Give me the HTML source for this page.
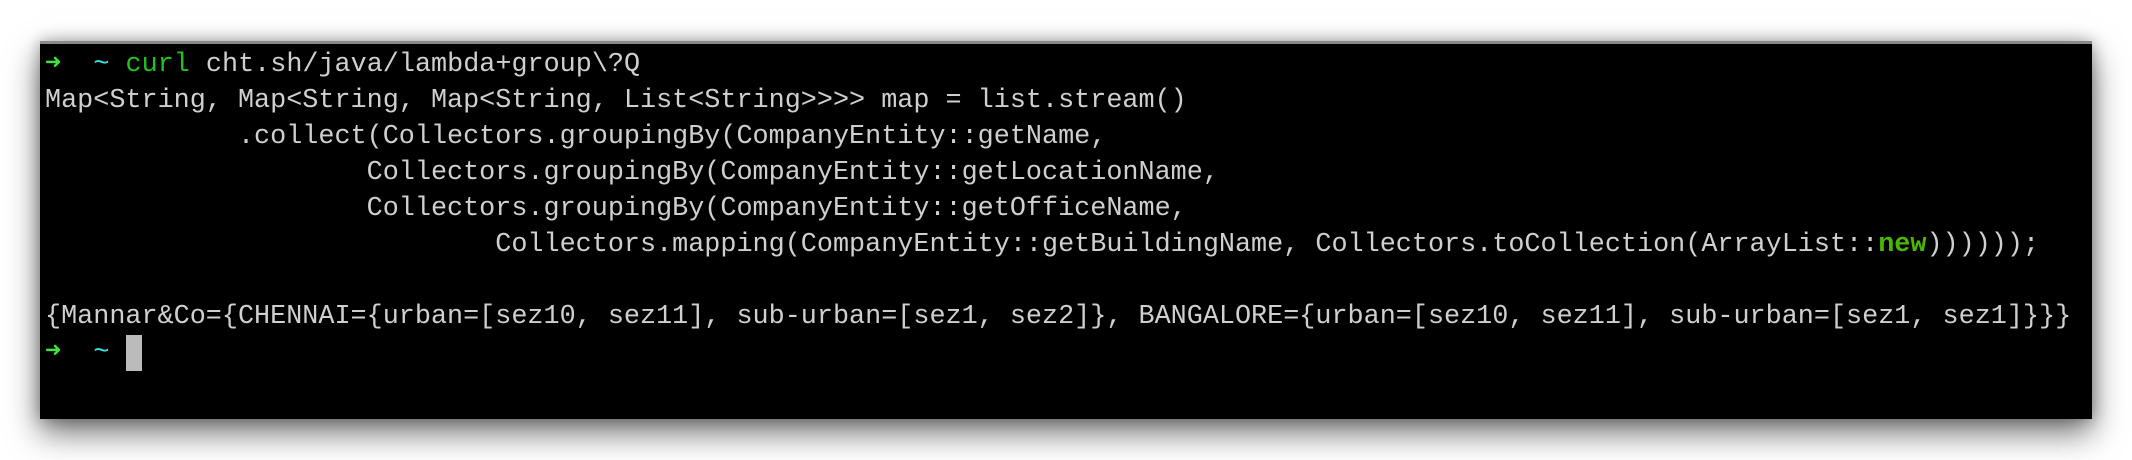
<!DOCTYPE html>
<html><head><meta charset="utf-8"><style>
html,body{margin:0;padding:0;background:#fff;width:2132px;height:460px;overflow:hidden}
.term{position:absolute;left:40px;top:41px;width:2052px;height:378px;background:#000;border-top:3px solid #8a8a8a;box-sizing:border-box;box-shadow:0 14px 30px rgba(0,0,0,.55),0 0 14px rgba(0,0,0,.3)}
pre{position:absolute;left:5px;top:3px;margin:0;font-family:"Liberation Mono","DejaVu Sans Mono",monospace;font-size:26.8px;line-height:36px;color:#cfcfcf;letter-spacing:0px}
.a{color:#3fe23f;font-weight:bold}.t{color:#3ee0e8}.c{color:#1fc21f}.n{color:#4ab800;font-weight:bold}
.cur{display:inline-block;width:16px;height:36px;background:#bbb;vertical-align:top}
</style></head><body>
<div class="term"><pre><span class="a">➜</span>  <span class="t">~</span> <span class="c">curl</span> cht.sh/java/lambda+group\?Q
Map&lt;String, Map&lt;String, Map&lt;String, List&lt;String&gt;&gt;&gt;&gt; map = list.stream()
            .collect(Collectors.groupingBy(CompanyEntity::getName,
                    Collectors.groupingBy(CompanyEntity::getLocationName,
                    Collectors.groupingBy(CompanyEntity::getOfficeName,
                            Collectors.mapping(CompanyEntity::getBuildingName, Collectors.toCollection(ArrayList::<span class="n">new</span>))))));

{Mannar&amp;Co={CHENNAI={urban=[sez10, sez11], sub-urban=[sez1, sez2]}, BANGALORE={urban=[sez10, sez11], sub-urban=[sez1, sez1]}}}
<span class="a">➜</span>  <span class="t">~</span> <span class="cur"></span></pre></div>
</body></html>
